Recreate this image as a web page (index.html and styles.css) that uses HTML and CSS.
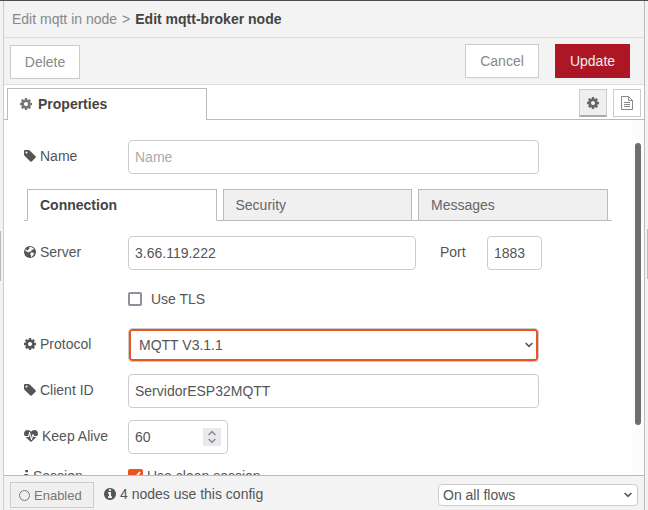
FILE: index.html
```html
<!DOCTYPE html>
<html lang="en">
<head>
<meta charset="utf-8">
<title>Edit mqtt-broker node</title>
<link rel="stylesheet" href="styles.css">
</head>
<body>
<svg class="defs" aria-hidden="true">
  <symbol id="cog" viewBox="0 -128 1536 1536"><path fill-rule="evenodd" d="M1024 640q0 106-75 181t-181 75-181-75-75-181 75-181 181-75 181 75 75 181zM1536 531v222q0 12-8 23t-20 13l-185 28q-19 54-39 91 35 50 107 138 10 12 10 25t-9 23q-27 37-99 108t-94 71q-12 0-26-9l-138-108q-44 23-91 38-16 136-29 186-7 28-36 28h-222q-14 0-24.5-8.500t-11.500-21.500l-28-184q-49-16-90-37l-141 107q-10 9-25 9-14 0-25-11-126-114-165-168-7-10-7-23 0-12 8-23 15-21 51-66.500t54-70.500q-27-50-41-99l-183-27q-13-2-21-12.500t-8-23.500v-222q0-12 8-23t19-13l186-28q14-46 39-92-40-57-107-138-10-12-10-24 0-10 9-23 26-36 98.500-107.500t94.500-71.500q13 0 26 10l138 107q44-23 91-38 16-136 29-186 7-28 36-28h222q14 0 24.500 8.500t11.500 21.500l28 184q49 16 90 37l142-107q9-9 24-9 13 0 25 10 129 119 165 170 7 8 7 22 0 12-8 23-15 21-51 66.500t-54 70.500q26 50 41 98l183 28q13 2 21 12.500t8 23.500z"/></symbol>
  <symbol id="tag" viewBox="128 128 1536 1536"><path fill-rule="evenodd" d="M576 448q0-53-37.500-90.500t-90.500-37.500-90.500 37.500-37.500 90.500 37.500 90.500 90.500 37.500 90.500-37.500 37.500-90.500zM1643 1024q0 53-37 90l-491 492q-39 37-91 37-53 0-90-37l-715-716q-38-37-64.500-101t-26.500-117v-416q0-52 38-90t90-38h416q53 0 117 26.500t102 64.500l715 714q37 39 37 91z"/></symbol>
  <symbol id="globe" viewBox="0 0 12 12"><circle cx="6" cy="6" r="6"/><path fill="#fff" d="M5.600 1.100 7 .9l2 1 1 1.200-.9.7-1.100-.4-.8.8.6.5-1 .8-1.200.1-.9 1L3.400 6l-.9-.8L1.200 5l.4-1.400 1.200.2.9.9.4-1 1.300-.9-.2-.8zM7 6.400l1.700.1 1.400 1-.9 1.700-1.500 1.600-.8.2.1-1.800-.8-1.400z"/></symbol>
  <symbol id="heartbeat" viewBox="0 128 1792 1536"><path d="M1280 1024h305q-5 6-10 10.500t-9 7.500l-3 4-623 600q-18 18-44 18t-44-18l-624-602q-5-2-21-20h369q22 0 39.500-13.500t22.500-34.500l70-281 190 667q6 20 23 33t39 13q21 0 38-13t23-33l146-485 56 112q18 35 57 35zm512-428q0 145-103 300h-369l-111-221q-8-17-25.500-27t-36.500-8q-45 5-56 46l-129 430-196-686q-6-20-23.500-33t-39.500-13-39 13.500-22 34.500l-116 464h-423q-103-155-103-300 0-220 127-344t351-124q62 0 126.500 21.500t120 58 95.500 68.500 76 68q36-36 76-68t95.500-68.500 120-58 126.500-21.500q224 0 351 124t127 344z"/></symbol>
  <symbol id="info-circle" viewBox="128 128 1536 1536"><path fill-rule="evenodd" d="M1152 1376v-160q0-14-9-23t-23-9h-96v-512q0-14-9-23t-23-9h-320q-14 0-23 9t-9 23v160q0 14 9 23t23 9h96v320h-96q-14 0-23 9t-9 23v160q0 14 9 23t23 9h448q14 0 23-9t9-23zm-128-896v-160q0-14-9-23t-23-9h-192q-14 0-23 9t-9 23v160q0 14 9 23t23 9h192q14 0 23-9t9-23zm640 416q0 209-103 385.500t-279.500 279.500-385.500 103-385.500-103-279.500-279.500-103-385.500 103-385.500 279.500-279.500 385.500-103 385.500 103 279.500 279.500 103 385.500z"/></symbol>
  <symbol id="info" viewBox="0 0 5 12"><path d="M1.300 0H4v2.300H1.300zM.3 4H4v6.500h1V12H0v-1.500h1v-5H.3z"/></symbol>
  <symbol id="file" viewBox="0 0 12 14"><path fill="none" stroke="currentColor" d="M.5.5h7l4 4v9H.5zM7.500.5v4h4M3 6.500h6M3 8.500h6M3 10.500h6"/></symbol>
  <symbol id="chevron" viewBox="0 0 8 6"><path fill="none" stroke="currentColor" stroke-width="1.600" d="M.6 1 4 4.400 7.400 1"/></symbol>
</svg>

<div class="workspace">
  <div class="gutter gutter-left"><i class="grip"></i></div>
  <main class="tray">
    <header class="breadcrumb">Edit mqtt in node<span class="sep">&gt;</span><b>Edit mqtt-broker node</b></header>

    <div class="toolbar">
      <button class="btn btn-delete">Delete</button>
      <button class="btn btn-cancel">Cancel</button>
      <button class="btn btn-update">Update</button>
    </div>

    <div class="tabbar">
      <div class="tab-lead"></div>
      <div class="tab-main"><svg class="icon"><use href="#cog"/></svg>Properties</div>
      <div class="tab-rest">
        <span class="tab-btn selected"><svg class="icon"><use href="#cog"/></svg></span>
        <span class="tab-btn"><svg class="icon-file"><use href="#file"/></svg></span>
      </div>
    </div>

    <section class="content">
      <form class="form">
        <div class="row">
          <label class="label"><svg class="icon"><use href="#tag"/></svg>Name</label>
          <input class="field wide" type="text" placeholder="Name">
        </div>

        <div class="subtabs">
          <span class="subtab active">Connection</span>
          <span class="subtab">Security</span>
          <span class="subtab">Messages</span>
        </div>

        <div class="row">
          <label class="label"><svg class="icon"><use href="#globe"/></svg>Server</label>
          <input class="field server" type="text" value="3.66.119.222">
          <label class="port-label">Port</label>
          <input class="field port" type="text" value="1883">
        </div>
        <div class="row">
          <span class="label"></span>
          <i class="checkbox"></i><span class="check-text">Use TLS</span>
        </div>
        <div class="row">
          <label class="label"><svg class="icon"><use href="#cog"/></svg>Protocol</label>
          <div class="select protocol"><span>MQTT V3.1.1</span><svg class="chevron"><use href="#chevron"/></svg></div>
        </div>
        <div class="row">
          <label class="label"><svg class="icon"><use href="#tag"/></svg>Client ID</label>
          <input class="field wide" type="text" value="ServidorESP32MQTT">
        </div>
        <div class="row">
          <label class="label"><svg class="icon-heart"><use href="#heartbeat"/></svg>Keep Alive</label>
          <div class="field keepalive"><span>60</span>
            <span class="spinner"><svg class="chevron up"><use href="#chevron"/></svg><svg class="chevron"><use href="#chevron"/></svg></span>
          </div>
        </div>
        <div class="row session">
          <label class="label"><svg class="icon-info"><use href="#info"/></svg>Session</label>
          <svg class="checked" viewBox="0 0 15 15"><rect width="15" height="15" rx="2" fill="#e95420"/><path d="M3.500 8 6 10.500 12 3" fill="none" stroke="#fff" stroke-width="2"/></svg>
          <span>Use clean session</span>
        </div>
      </form>
      <div class="scroll-track"><div class="scroll-thumb"></div></div>
    </section>

    <footer class="footer">
      <button class="enabled"><i class="ring"></i>Enabled</button>
      <span class="usage"><svg class="icon"><use href="#info-circle"/></svg>4 nodes use this config</span>
      <div class="select flows"><span>On all flows</span><svg class="chevron"><use href="#chevron"/></svg></div>
    </footer>
  </main>
  <div class="gutter gutter-right"><i class="grip"></i></div>
</div>
</body>
</html>
```
FILE: styles.css
```css
* { box-sizing: border-box; }
body {
  margin: 0;
  height: 510px;
  overflow: hidden;
  background: #fff;
  color: #555;
  font: 14px/20px "Liberation Sans", Arial, sans-serif;
}
input, button { font: inherit; color: inherit; margin: 0; }
svg { display: block; fill: currentColor; flex: none; }
.defs { display: none; }
.icon { width: 12px; height: 12px; }

.workspace { display: flex; height: 510px; border-top: 1px solid #504c50; }
.gutter { display: flex; flex: none; background: #f3f3f3; }
.gutter-left { width: 4px; border-right: 1px solid #ccc; }
.gutter-right { width: 4px; border-left: 1px solid #bbb; justify-content: flex-end; }
.grip { width: 1px; height: 50px; margin-top: 230px; background: #bbb; }
.gutter-right .grip { margin-top: 228px; }

.tray { flex: 1; min-width: 0; display: flex; flex-direction: column; }
.breadcrumb {
  height: 37px;
  padding: 8px 8px 0;
  background: #f3f3f3;
  border-bottom: 1px solid #ddd;
  color: #888;
}
.breadcrumb .sep { margin: 0 5px; }
.breadcrumb b { color: #444; }

.toolbar {
  display: flex;
  align-items: flex-start;
  height: 47px;
  padding: 6px 14px 0 6px;
  background: #f3f3f3;
  border-bottom: 1px solid #ddd;
}
.btn { height: 34px; padding: 0; background: #fff; border: 1px solid #ccc; color: #888; }
.btn-delete { width: 70px; margin: 1px auto 0 0; }
.btn-cancel { width: 74px; margin-right: 16px; }
.btn-update { width: 75px; background: #ad1625; border-color: #ad1625; color: #eee; }

.tabbar { display: flex; height: 35px; padding-top: 3px; }
.tab-lead { width: 3px; border-bottom: 1px solid #bbb; }
.tab-main {
  display: flex;
  align-items: center;
  gap: 6px;
  width: 200px;
  padding: 0 0 2px 12px;
  border: 1px solid #bbb;
  border-bottom: 0;
  color: #444;
  font-weight: bold;
}
.tab-main .icon { color: #777; }
.tab-rest {
  display: flex;
  flex: 1;
  justify-content: flex-end;
  gap: 6px;
  padding: 1px 3px 0 0;
  border-bottom: 1px solid #bbb;
}
.tab-btn {
  display: flex;
  align-items: center;
  justify-content: center;
  width: 28px;
  height: 28px;
  border: 1px solid #ccc;
  color: #888;
}
.tab-btn.selected { background: #efefef; border-bottom: 2px solid #aaa; color: #666; }
.icon-file { width: 12px; height: 14px; }

.content { display: flex; height: 355px; overflow: hidden; }
.form { flex: 1; padding: 20px 0 0 20px; }
.row { display: flex; align-items: center; height: 34px; margin-bottom: 12px; }
.label { display: flex; align-items: center; gap: 4px; width: 104px; height: 20px; margin-bottom: 2px; }
.icon-heart { width: 14px; height: 12px; }
.icon-info { width: 5px; height: 12px; }
.field {
  height: 34px;
  padding: 0 6px 1px;
  border: 1px solid #ccc;
  border-radius: 4px;
  background: #fff;
  outline: 0;
}
.field::placeholder { color: #aaa; opacity: 1; }
.wide { width: 411px; }
.server { width: 288px; }
.port-label { width: 47px; margin: 0 0 2px 24px; }
.port { width: 55px; }

.subtabs {
  display: flex;
  gap: 6px;
  width: 588px;
  height: 32px;
  margin: 15px 0;
  padding-left: 3px;
  background: linear-gradient(#bbb, #bbb) bottom / 100% 1px no-repeat;
}
.subtab {
  width: 189.500px;
  height: 32px;
  padding: 5px 12px 0;
  border: 1px solid #bbb;
  background: #f0f0f0;
  color: #666;
}
.subtab.active { background: #fff; border-bottom-color: #fff; color: #444; font-weight: bold; }

.checkbox { width: 14px; height: 14px; margin-right: 9px; border: 2px solid #8f8f9d; border-radius: 2px; }
.select { display: flex; align-items: center; justify-content: space-between; background: #fff; }
.chevron { width: 8px; height: 6px; }
.protocol {
  width: 411px;
  height: 34px;
  padding: 0 5px 0 8px;
  border: 1px solid #ccc;
  border-radius: 4px;
  box-shadow: inset 0 0 0 2px #e95420;
}
.protocol span { padding-left: 2px; }
.keepalive { display: flex; align-items: center; justify-content: space-between; width: 100px; }
.spinner {
  display: flex;
  flex-direction: column;
  align-items: center;
  justify-content: center;
  gap: 2px;
  width: 18px;
  height: 18px;
  background: #e9e9ed;
  color: #8f8f9d;
}
.up { transform: rotate(180deg); }
.session { height: 20px; align-items: flex-start; margin: 0; }
.session .label { margin: 0; }
.session .checked { width: 15px; height: 15px; margin: 3px 4px 0 0; }

.scroll-track { width: 12px; padding: 23px 3px 0; background: #fcfcfc; }
.scroll-thumb { height: 282px; border-radius: 3px; background: #6e6e6e; }

.footer {
  display: flex;
  align-items: flex-start;
  height: 35px;
  padding: 6px 6px 0;
  border-top: 1px solid #bbb;
  background: #f3f3f3;
}
.enabled {
  display: flex;
  align-items: center;
  gap: 4px;
  width: 84px;
  height: 26px;
  padding: 1px 0 0 8px;
  border: 1px solid #ccc;
  background: #efefef;
  color: #777;
  font-size: 13px;
}
.ring { width: 11px; height: 11px; border: 1px solid #777; border-radius: 50%; }
.usage { display: flex; align-items: center; gap: 4px; margin: 2px auto 0 10px; }
.flows {
  width: 200px;
  height: 22px;
  margin-top: 2px;
  padding: 0 5px 0 4px;
  border: 1px solid #ccc;
  border-radius: 4px;
}
```
